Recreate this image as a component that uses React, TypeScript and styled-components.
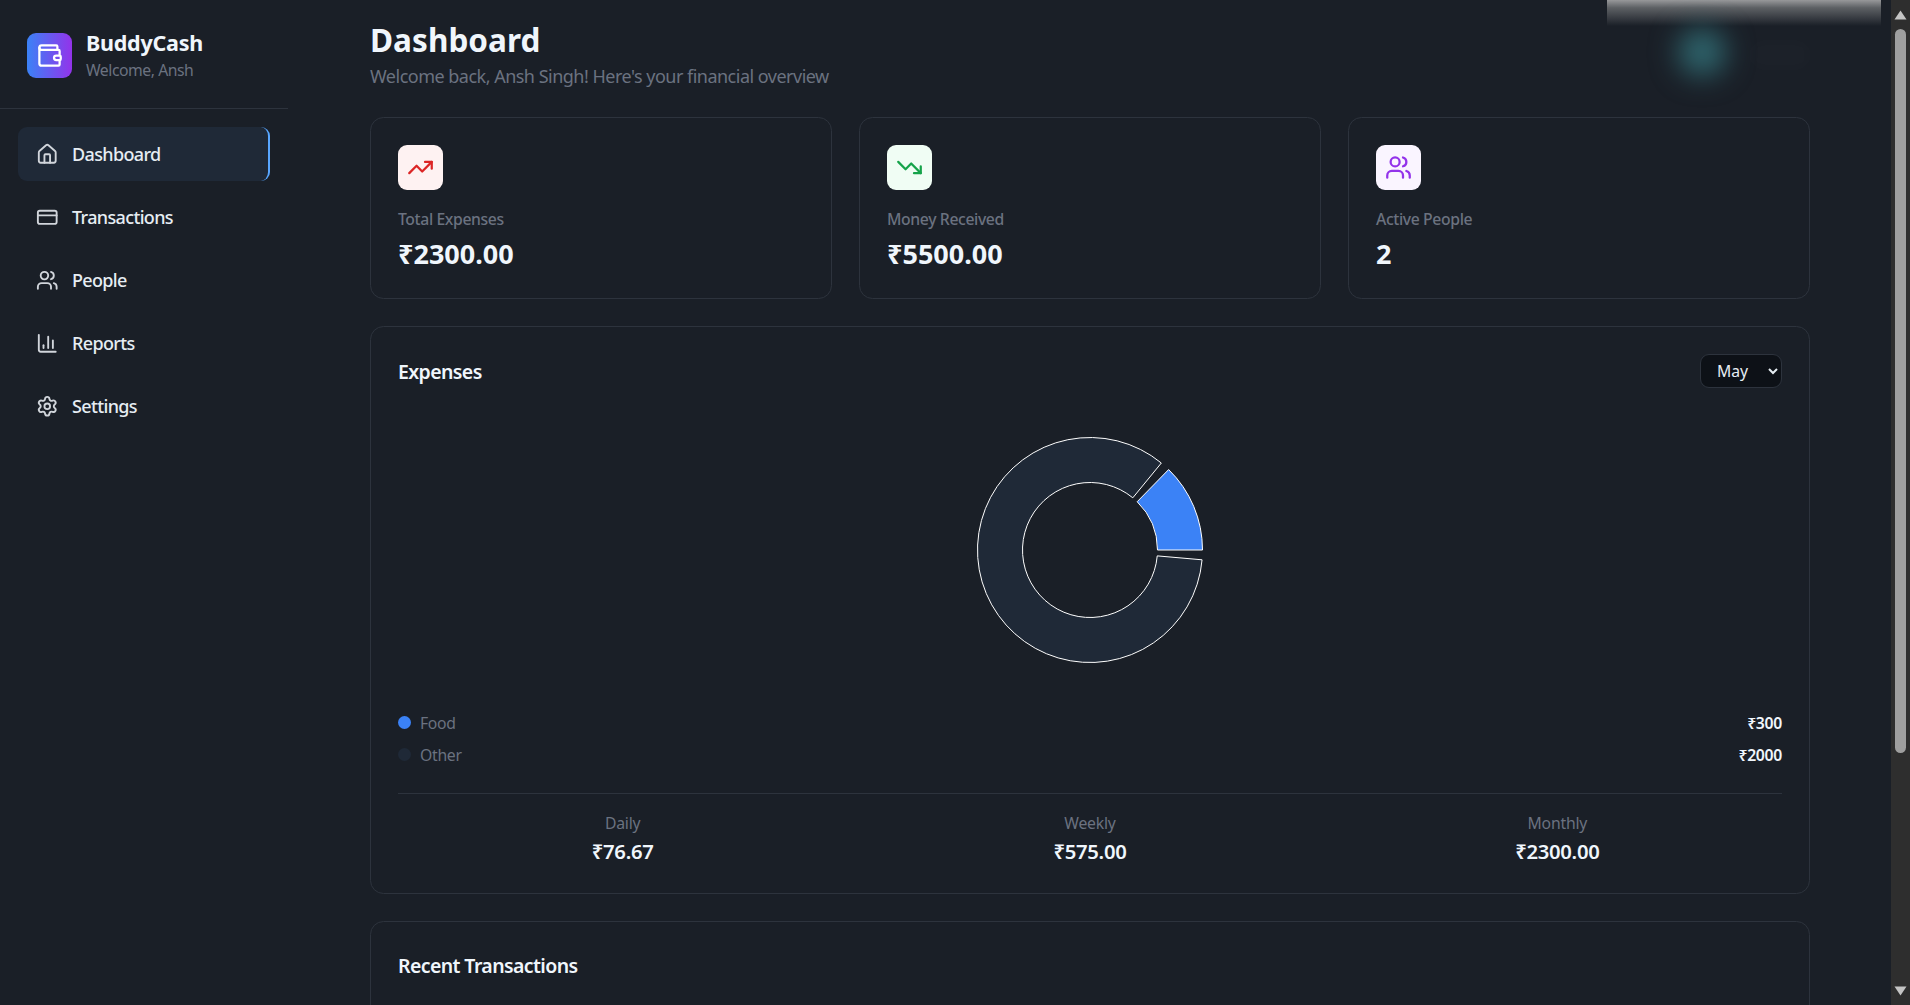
import * as React from 'react';
import styled, { createGlobalStyle } from 'styled-components';
import {
  BarChart3,
  CreditCard,
  Home,
  Settings,
  TrendingDown,
  TrendingUp,
  Users,
  Wallet,
} from 'lucide-react';

const GlobalStyle = createGlobalStyle`
  * { box-sizing: border-box; }
  html, body { margin: 0; padding: 0; height: 100%; overflow: hidden; background: #1a1f27; }
  body {
    font-family: "Noto Sans", "Open Sans", "Liberation Sans", sans-serif;
    font-size: 18px;
    color: #e6edf3;
  }
`;

const Shell = styled.div`
  display: flex;
  height: 100vh;
  overflow: hidden;
  position: relative;
`;

const Sidebar = styled.aside`
  width: 288px;
  flex: none;
`;

const Brand = styled.div`
  display: flex;
  align-items: center;
  gap: 14px;
  height: 109px;
  padding: 3px 27px 0;
  border-bottom: 1px solid #2d333d;
`;

const BrandIcon = styled.div`
  width: 45px;
  height: 45px;
  border-radius: 9px;
  display: flex;
  align-items: center;
  justify-content: center;
  color: #fff;
  background: linear-gradient(to right, #3b82f6, #9333ea);
`;

const BrandName = styled.div`
  margin-bottom: 2px;
  font-size: 21.5px;
  line-height: 26px;
  font-weight: 700;
  color: #f0f6fc;
  letter-spacing: -0.25px;
`;

const BrandSub = styled.div`
  font-size: 15.75px;
  line-height: 24px;
  color: #6b7280;
  letter-spacing: -0.46px;
`;

const Nav = styled.nav`
  display: flex;
  flex-direction: column;
  gap: 9px;
  padding: 18px;
`;

const NavItem = styled.a<{ $active?: boolean }>`
  display: flex;
  align-items: center;
  gap: 13.5px;
  height: 54px;
  padding: 0 18px;
  border-radius: 9px;
  font-size: 18px;
  font-weight: 500;
  letter-spacing: -0.65px;
  color: #e6edf3;
  background: ${({ $active }) => ($active ? '#1f2937' : 'transparent')};
  border-right: 2px solid ${({ $active }) => ($active ? '#58a6ff' : 'transparent')};

  svg {
    flex: none;
    color: #d1d5db;
  }
`;

const Main = styled.main`
  flex: 1;
  min-width: 0;
  padding: 17px 81px 0 82px;
  overflow: hidden;
`;

const PageTitle = styled.h1`
  margin: 0;
  font-size: 31.5px;
  line-height: 46px;
  font-weight: 700;
  color: #f0f6fc;
  letter-spacing: 0.05px;
`;

const PageSub = styled.p`
  margin: 0 0 27px;
  font-size: 18px;
  line-height: 27px;
  color: #6b7280;
  letter-spacing: -0.51px;
`;

const StatGrid = styled.div`
  display: grid;
  grid-template-columns: repeat(3, 1fr);
  gap: 27px;
  margin-bottom: 27px;
`;

const Card = styled.section`
  border: 1px solid #2d333d;
  border-radius: 13.5px;
  padding: 27px;
`;

const StatIcon = styled.div<{ $bg: string; $fg: string }>`
  width: 45px;
  height: 45px;
  border-radius: 9px;
  display: flex;
  align-items: center;
  justify-content: center;
  margin-bottom: 17px;
  background: ${({ $bg }) => $bg};
  color: ${({ $fg }) => $fg};
`;

const StatLabel = styled.div`
  font-size: 15.75px;
  line-height: 24px;
  font-weight: 500;
  color: #6b7280;
  letter-spacing: -0.38px;
`;

const StatValue = styled.div`
  margin-top: 5px;
  font-size: 27px;
  line-height: 35px;
  font-weight: 700;
  color: #f0f6fc;
`;

const CardHead = styled.div`
  display: flex;
  align-items: center;
  justify-content: space-between;
`;

const CardTitle = styled.h2`
  margin: 0;
  font-size: 19.5px;
  line-height: 27px;
  font-weight: 600;
  color: #f0f6fc;
  letter-spacing: -0.6px;
`;

const MonthSelect = styled.select`
  width: 82px;
  height: 34px;
  padding: 0 10px 0 12px;
  border: 1px solid #2d333d;
  border-radius: 9px;
  background: #0d1117;
  color: #e6edf3;
  font-family: inherit;
  font-size: 15.75px;
  color-scheme: dark;
`;

const ChartWrap = styled.div`
  display: flex;
  justify-content: center;
  padding: 46px 0 45px;
`;

const LegendRow = styled.div`
  display: flex;
  align-items: center;
  justify-content: space-between;
  height: 23px;
  margin-bottom: 9px;
`;

const LegendName = styled.div`
  display: flex;
  align-items: center;
  gap: 9px;
  font-size: 15.75px;
  color: #6b7280;
  letter-spacing: -0.3px;
`;

const Dot = styled.span<{ $color: string }>`
  width: 13px;
  height: 13px;
  border-radius: 50%;
  background: ${({ $color }) => $color};
`;

const LegendValue = styled.div`
  font-size: 15.75px;
  font-weight: 600;
  color: #f0f6fc;
  letter-spacing: -0.3px;
`;

const Summary = styled.div`
  display: grid;
  grid-template-columns: repeat(3, 1fr);
  gap: 18px;
  margin-top: 27px;
  padding: 17px 0 1px;
  border-top: 1px solid #2d333d;
`;

const SummaryCell = styled.div`
  text-align: center;
`;

const SummaryLabel = styled.div`
  font-size: 15.75px;
  line-height: 24px;
  color: #6b7280;
  letter-spacing: -0.2px;
`;

const SummaryValue = styled.div`
  margin-top: 3px;
  font-size: 20.25px;
  line-height: 27px;
  font-weight: 600;
  color: #f0f6fc;
  letter-spacing: -0.3px;
`;

const RecentCard = styled(Card)`
  margin-top: 27px;
  min-height: 300px;
  padding-top: 30px;
`;

const Rail = styled.div`
  width: 19px;
  flex: none;
  display: flex;
  flex-direction: column;
  align-items: center;
  background: #2e2e2e;
`;

const RailArrow = styled.svg`
  flex: none;
  width: 13px;
  height: 10px;
  margin: 10px 0 9px;
`;

const RailThumb = styled.div`
  width: 11px;
  height: 724px;
  border-radius: 6px;
  background: #9f9f9f;
`;

const RailSpacer = styled.div`
  flex: 1;
`;

// privacy blurs sitting on top of the captured page
const TopSmear = styled.div`
  position: absolute;
  top: 0;
  left: 1607px;
  width: 274px;
  height: 26px;
  background: linear-gradient(to bottom, #97989a, #5d6064 30%, #1a1f27);
`;

const AvatarBlur = styled.div`
  position: absolute;
  top: 28px;
  left: 1678px;
  width: 48px;
  height: 48px;
  border-radius: 50%;
  background: #2f666e;
  filter: blur(14px);
`;

const NameBlur = styled.div`
  position: absolute;
  top: 40px;
  left: 1750px;
  width: 60px;
  height: 30px;
  border-radius: 12px;
  background: rgba(255, 255, 255, 0.012);
  filter: blur(6px);
`;

const polar = (r: number, deg: number) => {
  const a = (deg * Math.PI) / 180;
  return `${(116 + r * Math.cos(a)).toFixed(2)} ${(116 - r * Math.sin(a)).toFixed(2)}`;
};

const sector = (from: number, to: number, inner = 67.5, outer = 112.5) => {
  const large = to - from > 180 ? 1 : 0;
  return [
    `M${polar(outer, from)}`,
    `A${outer} ${outer} 0 ${large} 0 ${polar(outer, to)}`,
    `L${polar(inner, to)}`,
    `A${inner} ${inner} 0 ${large} 1 ${polar(inner, from)}`,
    'Z',
  ].join(' ');
};

const Donut = () => (
  <svg width="232" height="232" viewBox="0 0 232 232">
    <path d={sector(0, 45.65)} fill="#3b82f6" stroke="#fff" />
    <path d={sector(50.65, 355)} fill="#1f2937" stroke="#fff" />
  </svg>
);

const navItems = [
  { label: 'Dashboard', icon: Home, active: true },
  { label: 'Transactions', icon: CreditCard },
  { label: 'People', icon: Users },
  { label: 'Reports', icon: BarChart3 },
  { label: 'Settings', icon: Settings },
];

const stats = [
  { label: 'Total Expenses', value: '₹2300.00', icon: TrendingUp, bg: '#fef2f2', fg: '#dc2626' },
  { label: 'Money Received', value: '₹5500.00', icon: TrendingDown, bg: '#f0fdf4', fg: '#16a34a' },
  { label: 'Active People', value: '2', icon: Users, bg: '#faf5ff', fg: '#9333ea' },
];

const legend = [
  { name: 'Food', value: '₹300', color: '#3b82f6' },
  { name: 'Other', value: '₹2000', color: '#1f2937' },
];

const summary = [
  { label: 'Daily', value: '₹76.67' },
  { label: 'Weekly', value: '₹575.00' },
  { label: 'Monthly', value: '₹2300.00' },
];

const App: React.FunctionComponent = () => (
  <Shell>
    <GlobalStyle />
    <Sidebar>
      <Brand>
        <BrandIcon>
          <Wallet size={27} />
        </BrandIcon>
        <div>
          <BrandName>BuddyCash</BrandName>
          <BrandSub>Welcome, Ansh</BrandSub>
        </div>
      </Brand>
      <Nav>
        {navItems.map(({ label, icon: Icon, active }) => (
          <NavItem key={label} $active={active}>
            <Icon size={22.5} />
            {label}
          </NavItem>
        ))}
      </Nav>
    </Sidebar>
    <Main>
      <PageTitle>Dashboard</PageTitle>
      <PageSub>Welcome back, Ansh Singh! Here's your financial overview</PageSub>
      <StatGrid>
        {stats.map(({ label, value, icon: Icon, bg, fg }) => (
          <Card key={label}>
            <StatIcon $bg={bg} $fg={fg}>
              <Icon size={27} />
            </StatIcon>
            <StatLabel>{label}</StatLabel>
            <StatValue>{value}</StatValue>
          </Card>
        ))}
      </StatGrid>
      <Card>
        <CardHead>
          <CardTitle>Expenses</CardTitle>
          <MonthSelect defaultValue="May">
            <option>May</option>
          </MonthSelect>
        </CardHead>
        <ChartWrap>
          <Donut />
        </ChartWrap>
        {legend.map(({ name, value, color }) => (
          <LegendRow key={name}>
            <LegendName>
              <Dot $color={color} />
              {name}
            </LegendName>
            <LegendValue>{value}</LegendValue>
          </LegendRow>
        ))}
        <Summary>
          {summary.map(({ label, value }) => (
            <SummaryCell key={label}>
              <SummaryLabel>{label}</SummaryLabel>
              <SummaryValue>{value}</SummaryValue>
            </SummaryCell>
          ))}
        </Summary>
      </Card>
      <RecentCard>
        <CardTitle>Recent Transactions</CardTitle>
      </RecentCard>
    </Main>
    <Rail>
      <RailArrow viewBox="0 0 13 10">
        <path d="M6.5 0.5 L12.5 9.5 L0.5 9.5 Z" fill="#c4c4c4" />
      </RailArrow>
      <RailThumb />
      <RailSpacer />
      <RailArrow viewBox="0 0 13 10">
        <path d="M0.5 0.5 L12.5 0.5 L6.5 9.5 Z" fill="#c4c4c4" />
      </RailArrow>
    </Rail>
    <TopSmear />
    <AvatarBlur />
    <NameBlur />
  </Shell>
);

export default App;
